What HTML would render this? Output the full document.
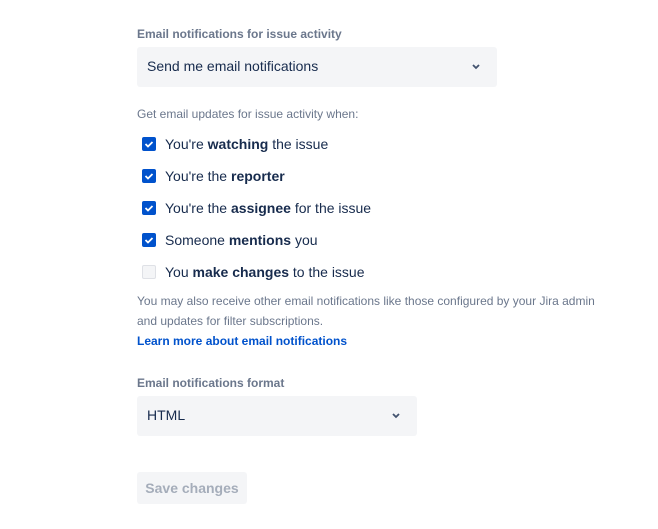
<!DOCTYPE html>
<html><head><style>
body{margin:0;background:#fff;font-family:"Liberation Sans",sans-serif;color:#172b4d;}
.a{position:absolute;white-space:nowrap;}
.lbl{font-size:12px;font-weight:bold;color:#6b778c;}
.sel{position:absolute;background:#f4f5f7;border-radius:3px;left:137px;}
.sel span{position:absolute;left:10px;font-size:14px;color:#172b4d;}
.cb{position:absolute;left:142px;width:14px;height:14px;border-radius:2px;background:#0052cc;}
.cb.off{background:#f4f5f7;border:1px solid #dfe1e6;width:12px;height:12px;}
.row{position:absolute;left:165px;font-size:14px;white-space:nowrap;}
.small{font-size:12px;color:#6b778c;}
</style></head><body>
<div class="a lbl" style="left:137px;top:27px">Email notifications for issue activity</div>
<div class="sel" style="top:47px;width:360px;height:40px"><span style="top:11px">Send me email notifications</span>
<svg style="position:absolute;left:334px;top:16px" width="10" height="8" viewBox="0 0 10 8"><path d="M2 2l3 3 3-3" fill="none" stroke="#42526e" stroke-width="1.8"/></svg></div>
<div class="a small" style="left:137px;top:107px">Get email updates for issue activity when:</div>

<div class="cb" style="top:137px"><svg width="14" height="14"><path d="M3.5 7l2.5 2.5 4.5-4.5" fill="none" stroke="#fff" stroke-width="1.8"/></svg></div>
<div class="row" style="top:136px">You're <b>watching</b> the issue</div>
<div class="cb" style="top:169px"><svg width="14" height="14"><path d="M3.5 7l2.5 2.5 4.5-4.5" fill="none" stroke="#fff" stroke-width="1.8"/></svg></div>
<div class="row" style="top:168px">You're the <b>reporter</b></div>
<div class="cb" style="top:201px"><svg width="14" height="14"><path d="M3.5 7l2.5 2.5 4.5-4.5" fill="none" stroke="#fff" stroke-width="1.8"/></svg></div>
<div class="row" style="top:200px">You're the <b>assignee</b> for the issue</div>
<div class="cb" style="top:233px"><svg width="14" height="14"><path d="M3.5 7l2.5 2.5 4.5-4.5" fill="none" stroke="#fff" stroke-width="1.8"/></svg></div>
<div class="row" style="top:232px">Someone <b>mentions</b> you</div>
<div class="cb off" style="top:265px"></div>
<div class="row" style="top:264px">You <b>make changes</b> to the issue</div>

<div class="a small" style="left:137px;top:294px">You may also receive other email notifications like those configured by your Jira admin</div>
<div class="a small" style="left:137px;top:314px">and updates for filter subscriptions.</div>
<div class="a" style="left:137px;top:334px;font-size:12px;font-weight:bold;color:#0052cc">Learn more about email notifications</div>

<div class="a lbl" style="left:137px;top:376px">Email notifications format</div>
<div class="sel" style="top:396px;width:280px;height:40px"><span style="top:11px">HTML</span>
<svg style="position:absolute;left:254px;top:16px" width="10" height="8" viewBox="0 0 10 8"><path d="M2 2l3 3 3-3" fill="none" stroke="#42526e" stroke-width="1.8"/></svg></div>

<div class="a" style="left:137px;top:472px;width:110px;height:32px;background:#f4f5f7;border-radius:3px;color:#a5adba;font-size:14px;font-weight:bold;line-height:32px;text-align:center">Save changes</div>
</body></html>
